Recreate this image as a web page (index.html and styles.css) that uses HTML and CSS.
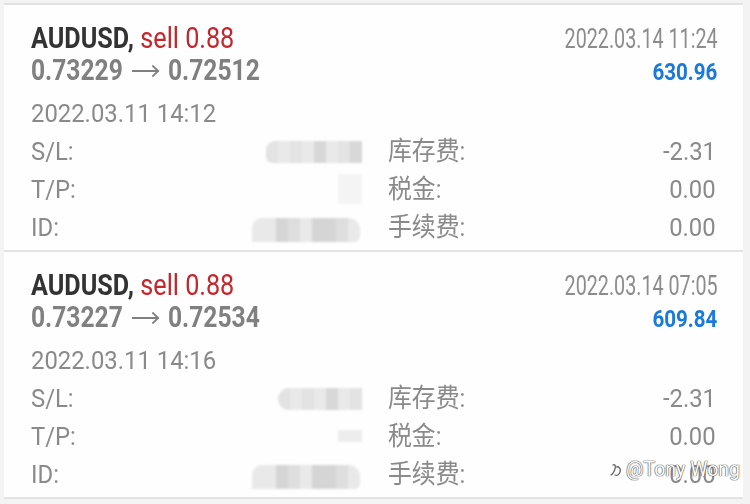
FILE: index.html
```html
<!DOCTYPE html>
<html lang="zh-CN">

<head>
  <meta charset="UTF-8">
  <meta name="viewport" content="width=device-width, initial-scale=1.0">
  <title>历史订单</title>
  <link rel="stylesheet" href="styles.css">
</head>

<body>
  <div class="list">

    <div class="order">
      <div class="line head">
        <span class="title"><b>AUDUSD,</b> <span class="sell">sell 0.88</span></span>
        <span class="closed">2022.03.14 11:24</span>
      </div>
      <div class="line prices">
        <span class="rate">0.73229<svg class="arrow" width="34" height="14" viewBox="0 0 34 14"><path d="M0 7 H32 M25 1.5 L32 7 L25 12.5" fill="none" stroke="#808080" stroke-width="2.2" /></svg>0.72512</span>
        <span class="profit">630.96</span>
      </div>
      <div class="opened"><span>2022.03.11 14:12</span></div>
      <div class="details">
        <div class="row">
          <span class="label">S/L:</span>
          <span class="blur sl"><i></i><i></i><i></i><i></i><i></i><i></i><i></i><i></i></span>
        </div>
        <div class="row">
          <span class="label">库存费:</span>
          <span class="value">-2.31</span>
        </div>
        <div class="row">
          <span class="label">T/P:</span>
          <span class="blur tp"><i></i><i></i></span>
        </div>
        <div class="row">
          <span class="label">税金:</span>
          <span class="value">0.00</span>
        </div>
        <div class="row">
          <span class="label">ID:</span>
          <span class="blur id"><i></i><i></i><i></i><i></i><i></i><i></i><i></i><i></i><i></i></span>
        </div>
        <div class="row">
          <span class="label">手续费:</span>
          <span class="value">0.00</span>
        </div>
      </div>
    </div>

    <div class="order">
      <div class="line head">
        <span class="title"><b>AUDUSD,</b> <span class="sell">sell 0.88</span></span>
        <span class="closed">2022.03.14 07:05</span>
      </div>
      <div class="line prices">
        <span class="rate">0.73227<svg class="arrow" width="34" height="14" viewBox="0 0 34 14"><path d="M0 7 H32 M25 1.5 L32 7 L25 12.5" fill="none" stroke="#808080" stroke-width="2.2" /></svg>0.72534</span>
        <span class="profit">609.84</span>
      </div>
      <div class="opened"><span>2022.03.11 14:16</span></div>
      <div class="details">
        <div class="row">
          <span class="label">S/L:</span>
          <span class="blur sl short"><i></i><i></i><i></i><i></i><i></i><i></i><i></i></span>
        </div>
        <div class="row">
          <span class="label">库存费:</span>
          <span class="value">-2.31</span>
        </div>
        <div class="row">
          <span class="label">T/P:</span>
          <span class="blur tp small"><i></i><i></i></span>
        </div>
        <div class="row">
          <span class="label">税金:</span>
          <span class="value">0.00</span>
        </div>
        <div class="row">
          <span class="label">ID:</span>
          <span class="blur id"><i></i><i></i><i></i><i></i><i></i><i></i><i></i><i></i><i></i></span>
        </div>
        <div class="row">
          <span class="label">手续费:</span>
          <span class="value">0.00</span>
        </div>
      </div>
    </div>

  </div>

  <!-- watermark on top of the last card -->
  <div class="mark">
    <svg width="14" height="16" viewBox="0 0 14 16">
      <path d="M4 3 C6 2 7 4 6 7 C5 10 4 12 2 13 M7 5 C10 4 12 7 11 10 C10 13 8 14 6 13"
        fill="none" stroke="#fff" stroke-width="3.2" stroke-linecap="round" />
      <path d="M4 3 C6 2 7 4 6 7 C5 10 4 12 2 13 M7 5 C10 4 12 7 11 10 C10 13 8 14 6 13"
        fill="none" stroke="#666" stroke-width="1.3" stroke-linecap="round" />
    </svg>
    <span>@Tony Wong</span>
  </div>
</body>

</html>
```

FILE: styles.css
```css
* {
  box-sizing: border-box;
}

body {
  margin: 0;
  padding-top: 3px;
  position: relative;
  height: 504px;
  overflow: hidden;
  background-color: #f3f3f3;
  font-family: Roboto, "Noto Sans CJK SC", sans-serif;
  color: #888;
}

.list {
  margin-left: 4px;
  width: 739px;
  border-top: 2px solid #e2e2e2;
}

.order {
  padding: 16.75px 25px 4px 27px;
  background-color: #fefefe;
  border-bottom: 2px solid #e3e3e3;
}

.line {
  display: flex;
  justify-content: space-between;
  align-items: baseline;
  white-space: nowrap;
}

.head {
  height: 33px;
}

.title {
  display: inline-block;
  font-size: 30px;
  line-height: 32px;
  color: #333;
  transform: scaleX(.84);
  transform-origin: left;
}

.title b {
  font-weight: 700;
}

.sell {
  color: #c4262c;
}

.closed {
  display: inline-block;
  font-size: 27px;
  line-height: 32px;
  color: #8c8c8c;
  transform: scaleX(.73);
  transform-origin: right;
}

.prices {
  height: 30px;
}

.rate {
  display: inline-block;
  font-size: 30px;
  line-height: 29px;
  font-weight: 700;
  color: #808080;
  transform: scaleX(.82);
  transform-origin: left;
}

.arrow {
  margin: 0 10px 0 11px;
  vertical-align: 2px;
}

.profit {
  display: inline-block;
  margin-right: 1px;
  font-size: 24.5px;
  line-height: 29px;
  font-weight: 700;
  color: #1a79dc;
  transform: scaleX(.84);
  transform-origin: right;
}

.opened {
  margin-top: 9px;
  font-size: 26.5px;
  line-height: 38px;
  color: #8a8a8a;
}

.opened span,
.label,
.value {
  display: inline-block;
  transform: scaleX(.9);
  transform-origin: left;
}

.details {
  display: grid;
  grid-template-columns: 331px 328px;
  column-gap: 26px;
  margin-right: 1px;
}

.row {
  display: flex;
  justify-content: space-between;
  align-items: center;
  height: 38px;
  font-size: 26.5px;
  line-height: 38px;
  color: #8a8a8a;
  white-space: nowrap;
}

.value {
  transform-origin: right;
}

/* pixelated cover over private numbers */
.blur {
  display: flex;
  overflow: hidden;
  filter: blur(1px);
}

.blur i {
  width: 12px;
  background: #e9e9e9;
}

.blur.sl {
  height: 22px;
  margin-top: 2px;
  border-radius: 9px 0 0 6px;
}

.blur.sl i:nth-child(odd) {
  background: #e3e3e3;
}

.blur.sl i:nth-child(5),
.blur.sl i:nth-child(8) {
  background: #d8d8d8;
}

.blur.sl.short {
  border-radius: 11px 0 0 11px;
}

.blur.tp {
  height: 30px;
  opacity: .45;
}

.blur.tp.small {
  height: 12px;
  opacity: .8;
}

.blur.id {
  height: 24px;
  margin-top: 6px;
  margin-right: 2px;
  border-radius: 10px 12px 6px 0;
  background: #eee;
}

.blur.id i:nth-child(3),
.blur.id i:nth-child(6),
.blur.id i:nth-child(7) {
  background: #d5d5d5;
}

.blur.id i:nth-child(4),
.blur.id i:nth-child(8) {
  background: #dedede;
}

.mark {
  position: absolute;
  left: 609px;
  top: 458px;
  display: flex;
  align-items: center;
  gap: 3px;
  font-size: 19.5px;
  color: #fff;
  text-shadow: 0 0 1px #555, 0 0 1px #555, 0 0 1px #555;
}
```
